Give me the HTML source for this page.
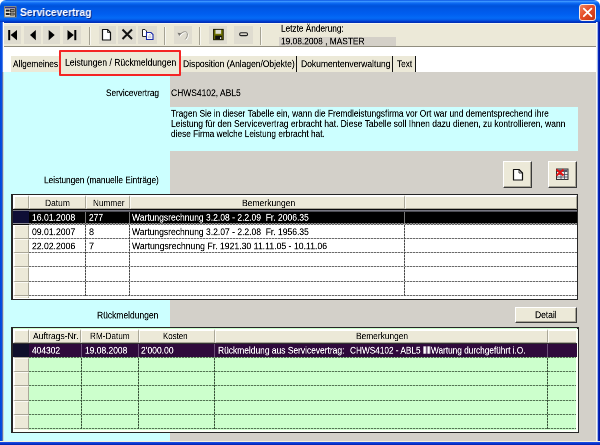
<!DOCTYPE html>
<html lang="de"><head><meta charset="utf-8"><title>Servicevertrag</title>
<style>
html,body{margin:0;padding:0;}
body{width:600px;height:445px;overflow:hidden;position:relative;background:#d4d0c8;font-family:"Liberation Sans",sans-serif;font-size:10px;color:#000;}
div,span,svg{position:absolute;box-sizing:border-box;}
.t{will-change:transform;-webkit-text-stroke:.3px currentColor;white-space:pre;font-size:20px;line-height:20px;height:20px;transform-origin:0 0;}
#title{left:0;top:0;width:600px;height:23px;background:linear-gradient(#0a52e0 0,#2a80f8 1px,#3c98ff 1.6px,#1a74f6 2.6px,#0460ec 4px,#0052da 6px,#0058e6 9px,#005ef0 14px,#046af6 18px,#0458e6 20px,#0038c8 21.6px,#002cb0 23px);border-radius:6px 6px 0 0;}
#lb{z-index:5;left:0;top:22px;width:4px;height:50px;background:linear-gradient(90deg,#0046d8 0,#0a50e6 2px,#6f92e8 2.7px,#fbfbf6 3.3px,#fff 4px);}
#lb2{z-index:5;left:0;top:72px;width:4px;height:373px;background:linear-gradient(90deg,#0046d8 0,#0a50e6 2px,#5a6fb0 2.5px,#9a968c 3px,#d8e8e0 3.6px,#ccffff 4px);}
#rb{z-index:5;left:596.3px;top:22px;width:3.7px;height:423px;background:linear-gradient(90deg,#f1efe4 0,#fff 1px,#8ea6e6 1.6px,#0a30c8 2.1px,#00139c 3.7px);}
#bb{z-index:6;left:0;top:440.6px;width:600px;height:4.4px;background:linear-gradient(#fffbe8 0,#efe8d0 .9px,#2050e0 1.2px,#0a3ad8 2.2px,#001aa0 4.4px);}
#tb{left:3px;top:23px;width:594px;height:24.2px;background:#ece9d8;border-bottom:1px solid #918e7f;border-top:1px solid #f7f6ef;}
.b{background:#dfdcd0;top:25.7px;height:18.4px;}
.sep{top:27px;height:18px;width:2.3px;border-left:1.3px solid #a5a293;border-right:1px solid #f8f7f0;}
#tabs{left:3px;top:47.2px;width:594px;height:24.8px;background:#fff;}
.tab{top:55.5px;height:16.5px;background:#ece9d8;}
.vl{top:56px;height:15.5px;width:1px;background:#151515;}
#cy{left:3px;top:72px;width:167.2px;height:369px;background:#ccffff;}
#gr{left:170px;top:72px;width:427px;height:369px;background:#d3d0c9;}
.grid{background:#fff;border:1.6px solid #262626;}
.hc{background:#ece9d8;border-right:1px solid #aaa798;border-bottom:1px solid #aaa798;border-left:.7px solid #fbfaf3;border-top:.7px solid #fbfaf3;}
.hc.tp{border-top:2px solid #fff;}
.hc.lf{border-left:2px solid #fff;}
.btn{background:#ece9d8;border:1px solid;border-color:#fff #3a3a3a #3a3a3a #fff;box-shadow:inset -1px -1px 0 #a8a597;}
.hl{height:1px;background:repeating-linear-gradient(90deg,#6a6a6a 0,#6a6a6a 2px,#c6c6c6 2px,#c6c6c6 3px);}
.vln{width:1px;background:repeating-linear-gradient(0deg,#484848 0,#484848 2px,#b0b0b0 2px,#b0b0b0 3px);}
.hl.g{background:repeating-linear-gradient(90deg,#547454 0,#547454 2px,#a6d6a6 2px,#a6d6a6 3px);}
.vln.g{background:repeating-linear-gradient(0deg,#385038 0,#385038 2px,#8cbc8c 2px,#8cbc8c 3px);}
</style></head><body>
<div style="left:0;top:0;width:600px;height:10px;background:#fff"></div>
<div id="title"></div>
<div id="lb"></div><div id="lb2"></div><div id="rb"></div><div id="bb"></div>
<svg style="left:4px;top:6px" width="13" height="12" viewBox="0 0 13 12"><rect x="0.5" y="0.7" width="11.5" height="10.3" fill="#e9e5d6" stroke="#8f8a78" stroke-width="1"/><rect x="1" y="1.1" width="10.5" height="1.3" fill="#23237c"/><rect x="11" y="1.5" width="1.2" height="9.5" fill="#4a463c"/><rect x="1.8" y="3.6" width="3.8" height="2" fill="#1e1e1e"/><rect x="1.8" y="7" width="3.8" height="2" fill="#1e1e1e"/><rect x="6.4" y="3.6" width="3.8" height="2.1" fill="#9a978c" stroke="#262626" stroke-width=".8"/><rect x="6.4" y="7" width="3.8" height="2.1" fill="#9a978c" stroke="#262626" stroke-width=".8"/></svg>
<span id="ttl" style="will-change:transform;left:20px;top:6.3px;white-space:pre;font-size:11px;line-height:13px;height:13px;font-weight:bold;color:#fff;transform-origin:0 0;transform:scaleX(.935);text-shadow:1px 1px 0 #0a2a8a">Servicevertrag</span>
<div style="left:579px;top:4px;width:17px;height:16.8px;border-radius:3px;border:1px solid #fbe9e2;background:linear-gradient(135deg,#f08460,#e64e28 45%,#c4340f)"></div>
<svg style="left:579px;top:4px" width="17" height="16" viewBox="0 0 17 16"><path d="M4.8 4.6 L12.4 12.2 M12.4 4.6 L4.8 12.2" stroke="#fff" stroke-width="1.8" stroke-linecap="round"/></svg>

<div id="tb"></div>
<div class="b" style="left:3px;width:18px"></div>
<div class="b" style="left:24px;width:17px"></div>
<div class="b" style="left:43px;width:17px"></div>
<div class="b" style="left:63px;width:18px"></div>
<div class="b" style="left:99px;width:17px"></div>
<div class="b" style="left:118px;width:18px"></div>
<div class="b" style="left:138px;width:19px"></div>
<div class="b" style="left:174px;width:18px"></div>
<div class="b" style="left:209px;width:18px"></div>
<div class="b" style="left:234px;width:19px"></div>
<div class="sep" style="left:88.5px"></div>
<div class="sep" style="left:164px"></div>
<div class="sep" style="left:199px"></div>
<div class="sep" style="left:260px"></div>
<svg style="left:0;top:22px" width="270" height="26" viewBox="0 0 270 26">
 <g fill="#000">
 <rect x="8.2" y="8" width="2" height="10.2"/><path d="M17 8 V18.2 L10.6 13.1z"/>
 <path d="M35.8 8 V18.2 L30 13.1z"/>
 <path d="M48.7 8 V18.2 L54.7 13.1z"/>
 <path d="M67.5 8 V18.2 L73.8 13.1z"/><rect x="74.3" y="8" width="2" height="10.2"/>
 </g>
 <path d="M102.5 7.5 H107.5 L110.5 10.5 V18 H102.5z" fill="#fff" stroke="#111" stroke-width="1.2" stroke-linejoin="round"/>
 <path d="M107.5 7.5 V10.5 H110.5" fill="none" stroke="#111" stroke-width=".8"/>
 <path d="M122.5 7.5 L132 17 M132 7.5 L122.5 17" stroke="#111" stroke-width="2"/>
 <path d="M142.5 7.5 H145 L146.5 9 V14.5 H142.5z" fill="#fff" stroke="#222" stroke-width="1"/>
 <path d="M146.5 10.5 H151 L153 12.5 V17.5 H146.5z" fill="#fff" stroke="#1a2aa8" stroke-width="1.1"/>
 <path d="M149 12.7 H151 M148 14.2 H151.5 M148 15.7 H151.5" stroke="#99a" stroke-width=".6"/>
 <path d="M178.3 11.6 L182.3 12 L180.1 14.8z" fill="#fff"/>
 <path d="M180.8 13.3 C183.3 10.3 187.3 9.3 188.1 12.3 C188.6 14.8 187.3 16.8 186.1 18.1" fill="none" stroke="#fff" stroke-width="1"/>
 <path d="M177.5 10.8 L181.5 11.2 L179.3 14z" fill="#767570"/>
 <path d="M180 12.5 C182.5 9.5 186.5 8.5 187.3 11.5 C187.8 14 186.5 16 185.3 17.3" fill="none" stroke="#94928a" stroke-width="1"/>
 <rect x="213.6" y="7.4" width="9.6" height="10.3" fill="#6f7200" stroke="#1a1a00" stroke-width="1"/>
 <rect x="215.5" y="7.9" width="5.6" height="3.9" fill="#dcdcd0"/><rect x="215.2" y="13.6" width="6.6" height="3.8" fill="#111"/><rect x="220" y="15.2" width="1.2" height="1.8" fill="#e4e4e4"/>
 <rect x="239.7" y="10.8" width="7.8" height="2.8" rx="1.2" fill="#d8d5ca" stroke="#222" stroke-width="1.1"/>
</svg>
<div style="left:279px;top:36.5px;width:117px;height:9px;background:#d4d0c8"></div>

<div id="tabs"></div>
<div class="tab" style="left:11px;width:48px"></div>
<div class="tab" style="left:180px;width:236px"></div>
<div class="vl" style="left:296px"></div><div class="vl" style="left:392px"></div><div class="vl" style="left:414.5px"></div>
<div id="cy"></div><div id="gr"></div>
<div style="left:58.7px;top:49.5px;width:122px;height:26.5px;background:#ece9d8;border:2px solid #f42424;border-radius:1px"></div>
<div style="left:170px;top:107.3px;width:407.7px;height:43.7px;background:#ccffff"></div>

<div class="btn" style="left:503px;top:161px;width:29px;height:27px"></div>
<div class="btn" style="left:548px;top:161px;width:28.8px;height:27px"></div>
<svg style="left:500px;top:160px" width="80" height="30" viewBox="0 0 80 30">
 <path d="M13.5 9.5 H19 L22.5 13 V20 H13.5z" fill="#fff" stroke="#111" stroke-width="1.2" stroke-linejoin="round"/>
 <path d="M19 9.5 V13 H22.5" fill="none" stroke="#111" stroke-width=".8"/>
 <rect x="56.5" y="9" width="11.5" height="10.5" fill="#e8e8e8" stroke="#333" stroke-width="1"/>
 <rect x="57" y="9.5" width="10.5" height="2.5" fill="#556"/>
 <path d="M57 14.5 H68 M57 17 H68 M61 12 V19.5 M64.5 12 V19.5" stroke="#445" stroke-width=".8"/>
 <path d="M56.5 9.5 L63.5 15.5 M63.5 9.5 L56.5 15.5" stroke="#e81010" stroke-width="1.8"/>
</svg>
<div class="btn" style="left:514.7px;top:306.7px;width:62.6px;height:16.3px"></div>

<div style="left:11.1px;top:193.7px;width:567.1px;height:106.1px;background:#262626;"></div>
<div style="left:12.6px;top:195.2px;width:564.5px;height:103.5px;background:#fff;"></div>
<div class="hc tp lf" style="left:12.8px;top:195.3px;width:16.1px;height:13.5px;"></div>
<div class="hc tp" style="left:28.9px;top:195.3px;width:57.0px;height:13.5px;"></div>
<div class="hc tp" style="left:85.9px;top:195.3px;width:43.8px;height:13.5px;"></div>
<div class="hc tp" style="left:129.7px;top:195.3px;width:275.5px;height:13.5px;"></div>
<div class="hc tp" style="left:405.2px;top:195.3px;width:171.7px;height:13.5px;"></div>
<div class="hc lf" style="left:12.8px;top:208.8px;width:16.1px;height:15.8px;"></div>
<div class="hc lf" style="left:12.8px;top:224.6px;width:16.1px;height:14.1px;"></div>
<div class="hc lf" style="left:12.8px;top:238.7px;width:16.1px;height:14.3px;"></div>
<div class="hc lf" style="left:12.8px;top:253.0px;width:16.1px;height:14.3px;"></div>
<div class="hc lf" style="left:12.8px;top:267.3px;width:16.1px;height:14.3px;"></div>
<div class="hc lf" style="left:12.8px;top:281.6px;width:16.1px;height:14.2px;"></div>
<div class="hc lf" style="left:12.8px;top:295.8px;width:16.1px;height:2.7px;border-bottom:none;"></div>
<div class="hl" style="left:28.9px;top:223.6px;width:548.0px;height:1.0px;"></div>
<div class="hl" style="left:28.9px;top:237.7px;width:548.0px;height:1.0px;"></div>
<div class="hl" style="left:28.9px;top:252.0px;width:548.0px;height:1.0px;"></div>
<div class="hl" style="left:28.9px;top:266.3px;width:548.0px;height:1.0px;"></div>
<div class="hl" style="left:28.9px;top:280.6px;width:548.0px;height:1.0px;"></div>
<div class="hl" style="left:28.9px;top:294.8px;width:548.0px;height:1.0px;"></div>
<div class="vln" style="left:85.1px;top:208.8px;width:1.0px;height:87.0px;"></div>
<div class="vln" style="left:128.9px;top:208.8px;width:1.0px;height:87.0px;"></div>
<div class="vln" style="left:404.4px;top:208.8px;width:1.0px;height:87.0px;"></div>
<div style="left:12.8px;top:208.8px;width:564.1px;height:15.6px;background:#000;box-shadow:inset 0 1.3px 0 #0a0a0a,inset 0 2.6px 0 #9a9aa8;"></div>
<div style="left:12.8px;top:211.4px;width:16.1px;height:11.5px;background:#0e0e36;"></div>
<div style="left:12.8px;top:222.9px;width:16.1px;height:1.3px;background:#8c8c94;"></div>
<div style="left:12.8px;top:224.2px;width:16.1px;height:1.3px;background:#0a0a0a;"></div>
<div style="left:28.9px;top:223.4px;width:548.0px;height:1.0px;background:repeating-linear-gradient(90deg,#8a8a8a 0,#8a8a8a 2px,#3a3a3a 2px,#3a3a3a 3px);"></div>
<div style="left:85.1px;top:211.8px;width:1.0px;height:11.4px;background:#777;"></div>
<div style="left:128.9px;top:211.8px;width:1.0px;height:11.4px;background:#777;"></div>
<div style="left:404.4px;top:211.8px;width:1.0px;height:11.4px;background:#777;"></div>
<div style="left:11.1px;top:326.9px;width:567.5px;height:106.4px;background:#262626;"></div>
<div style="left:12.6px;top:328.4px;width:564.9px;height:103.8px;background:#ccffcc;"></div>
<div class="hc tp lf" style="left:12.8px;top:328.5px;width:16.1px;height:14.1px;"></div>
<div class="hc tp" style="left:28.9px;top:328.5px;width:52.4px;height:14.1px;"></div>
<div class="hc tp" style="left:81.3px;top:328.5px;width:57.3px;height:14.1px;"></div>
<div class="hc tp" style="left:138.6px;top:328.5px;width:76.3px;height:14.1px;"></div>
<div class="hc tp" style="left:214.9px;top:328.5px;width:333.0px;height:14.1px;"></div>
<div class="hc tp" style="left:547.9px;top:328.5px;width:29.4px;height:14.1px;"></div>
<div class="hc lf" style="left:12.8px;top:343.5px;width:16.1px;height:14.3px;"></div>
<div class="hc lf" style="left:12.8px;top:357.8px;width:16.1px;height:14.2px;"></div>
<div class="hc lf" style="left:12.8px;top:372.0px;width:16.1px;height:14.3px;"></div>
<div class="hc lf" style="left:12.8px;top:386.3px;width:16.1px;height:14.3px;"></div>
<div class="hc lf" style="left:12.8px;top:400.6px;width:16.1px;height:14.3px;"></div>
<div class="hc lf" style="left:12.8px;top:414.9px;width:16.1px;height:14.3px;"></div>
<div class="hc lf" style="left:12.8px;top:429.2px;width:16.1px;height:2.8px;border-bottom:none;"></div>
<div class="hl g" style="left:28.9px;top:356.8px;width:548.4px;height:1.0px;"></div>
<div class="hl g" style="left:28.9px;top:371.0px;width:548.4px;height:1.0px;"></div>
<div class="hl g" style="left:28.9px;top:385.3px;width:548.4px;height:1.0px;"></div>
<div class="hl g" style="left:28.9px;top:399.6px;width:548.4px;height:1.0px;"></div>
<div class="hl g" style="left:28.9px;top:413.9px;width:548.4px;height:1.0px;"></div>
<div class="hl g" style="left:28.9px;top:428.2px;width:548.4px;height:1.0px;"></div>
<div class="vln g" style="left:80.5px;top:342.6px;width:1.0px;height:86.6px;"></div>
<div class="vln g" style="left:137.8px;top:342.6px;width:1.0px;height:86.6px;"></div>
<div class="vln g" style="left:214.1px;top:342.6px;width:1.0px;height:86.6px;"></div>
<div class="vln g" style="left:547.1px;top:342.6px;width:1.0px;height:86.6px;"></div>
<div style="left:576.0px;top:328.5px;width:1.6px;height:103.8px;background:#fbfff8;"></div>
<div style="left:12.8px;top:430.4px;width:564.8px;height:1.9px;background:#fbfff8;"></div>
<div style="left:28.9px;top:343.5px;width:548.4px;height:13.8px;background:#2f0a3c;"></div>
<div style="left:12.8px;top:343.5px;width:16.1px;height:13.8px;background:#10102c;"></div>
<div style="left:12.8px;top:342.6px;width:564.5px;height:0.9px;background:#333;"></div>
<div style="left:80.5px;top:343.8px;width:1.0px;height:13.2px;background:#6b4f78;"></div>
<div style="left:137.8px;top:343.8px;width:1.0px;height:13.2px;background:#6b4f78;"></div>
<div style="left:214.1px;top:343.8px;width:1.0px;height:13.2px;background:#6b4f78;"></div>
<div style="left:547.1px;top:343.8px;width:1.0px;height:13.2px;background:#6b4f78;"></div>
<span class="t" style="left:280.8px;top:23px;transform:translateY(0.64px) scale(0.4116,0.470);">Letzte Änderung:</span>
<span class="t" style="left:280.5px;top:36px;transform:translateY(0.34px) scale(0.4173,0.470);">19.08.2008 , MASTER</span>
<span class="t" style="left:13.0px;top:59px;transform:translateY(0.04px) scale(0.4130,0.470);">Allgemeines</span>
<span class="t" style="left:65.0px;top:57px;transform:translateY(0.64px) scale(0.4292,0.470);">Leistungen / Rückmeldungen</span>
<span class="t" style="left:183.0px;top:59px;transform:translateY(0.04px) scale(0.4222,0.470);">Disposition (Anlagen/Objekte)</span>
<span class="t" style="left:300.5px;top:59px;transform:translateY(0.04px) scale(0.4259,0.470);">Dokumentenverwaltung</span>
<span class="t" style="left:397.3px;top:59px;transform:translateY(0.04px) scale(0.4143,0.470);">Text</span>
<span class="t" style="left:105.8px;top:88px;transform:translateY(0.04px) scale(0.4111,0.470);">Servicevertrag</span>
<span class="t" style="left:171.3px;top:88px;transform:translateY(0.04px) scale(0.4236,0.470);">CHWS4102, ABL5</span>
<span class="t" style="left:171.0px;top:108px;transform:translateY(0.64px) scale(0.4175,0.470);">Tragen Sie in dieser Tabelle ein, wann die Fremdleistungsfirma vor Ort war und dementsprechend ihre</span>
<span class="t" style="left:171.0px;top:118px;transform:translateY(0.84px) scale(0.4229,0.470);">Leistung für den Servicevertrag erbracht hat. Diese Tabelle soll Ihnen dazu dienen, zu kontrollieren, wann</span>
<span class="t" style="left:171.0px;top:128px;transform:translateY(0.94px) scale(0.4142,0.470);">diese Firma welche Leistung erbracht hat.</span>
<span class="t" style="left:44.0px;top:175px;transform:translateY(0.24px) scale(0.4130,0.470);">Leistungen (manuelle Einträge)</span>
<span class="t" style="left:96.6px;top:310px;transform:translateY(0.44px) scale(0.4241,0.470);">Rückmeldungen</span>
<span class="t" style="left:535.3px;top:310px;transform:translateY(0.04px) scale(0.4243,0.470);">Detail</span>
<span class="t" style="left:45.3px;top:198px;transform:translateY(0.24px) scale(0.4227,0.470);-webkit-text-stroke:.1px #000;">Datum</span>
<span class="t" style="left:92.6px;top:198px;transform:translateY(0.24px) scale(0.4108,0.470);-webkit-text-stroke:.1px #000;">Nummer</span>
<span class="t" style="left:242.3px;top:198px;transform:translateY(0.24px) scale(0.4272,0.470);-webkit-text-stroke:.1px #000;">Bemerkungen</span>
<span class="t" style="left:31.8px;top:212px;color:#fff;transform:translateY(0.64px) scale(0.4315,0.470);">16.01.2008</span>
<span class="t" style="left:89.0px;top:212px;color:#fff;transform:translateY(0.64px) scale(0.4195,0.470);">277</span>
<span class="t" style="left:132.0px;top:212px;color:#fff;transform:translateY(0.64px) scale(0.4259,0.470);">Wartungsrechnung 3.2.08 - 2.2.09  Fr. 2006.35</span>
<span class="t" style="left:31.8px;top:227px;transform:translateY(0.04px) scale(0.4315,0.470);">09.01.2007</span>
<span class="t" style="left:89.0px;top:227px;transform:translateY(0.04px) scale(0.4494,0.470);">8</span>
<span class="t" style="left:132.0px;top:227px;transform:translateY(0.04px) scale(0.4259,0.470);">Wartungsrechnung 3.2.07 - 2.2.08  Fr. 1956.35</span>
<span class="t" style="left:31.8px;top:241px;transform:translateY(0.24px) scale(0.4315,0.470);">22.02.2006</span>
<span class="t" style="left:89.0px;top:241px;transform:translateY(0.24px) scale(0.4494,0.470);">7</span>
<span class="t" style="left:132.0px;top:241px;transform:translateY(0.24px) scale(0.4338,0.470);">Wartungsrechnung Fr. 1921.30 11.11.05 - 10.11.06</span>
<span class="t" style="left:32.9px;top:331px;transform:translateY(0.24px) scale(0.4255,0.470);-webkit-text-stroke:.1px #000;">Auftrags-Nr.</span>
<span class="t" style="left:90.4px;top:331px;transform:translateY(0.24px) scale(0.4096,0.470);-webkit-text-stroke:.1px #000;">RM-Datum</span>
<span class="t" style="left:163.3px;top:331px;transform:translateY(0.24px) scale(0.3935,0.470);-webkit-text-stroke:.1px #000;">Kosten</span>
<span class="t" style="left:356.0px;top:331px;transform:translateY(0.24px) scale(0.4176,0.470);-webkit-text-stroke:.1px #000;">Bemerkungen</span>
<span class="t" style="left:31.8px;top:345px;color:#fff;transform:translateY(0.54px) scale(0.4210,0.470);">404302</span>
<span class="t" style="left:84.5px;top:345px;color:#fff;transform:translateY(0.54px) scale(0.4225,0.470);">19.08.2008</span>
<span class="t" style="left:141.2px;top:345px;color:#fff;transform:translateY(0.54px) scale(0.4282,0.470);">2&#x27;000.00</span>
<span class="t" style="left:217.5px;top:345px;color:#fff;transform:translateY(0.54px) scale(0.4211,0.470);">Rückmeldung aus Servicevertrag:</span>
<span class="t" style="left:350.4px;top:345px;color:#fff;transform:translateY(0.54px) scale(0.4124,0.470);">CHWS4102 - ABL5</span>
<span class="t" style="left:421.6px;top:345px;color:#fff;transform:translateY(0.54px) scale(0.9437,0.470);font-weight:bold;"><b>‖</b></span>
<span class="t" style="left:430.5px;top:345px;color:#fff;transform:translateY(0.54px) scale(0.4120,0.470);">Wartung durchgeführt i.O.</span>
</body></html>
